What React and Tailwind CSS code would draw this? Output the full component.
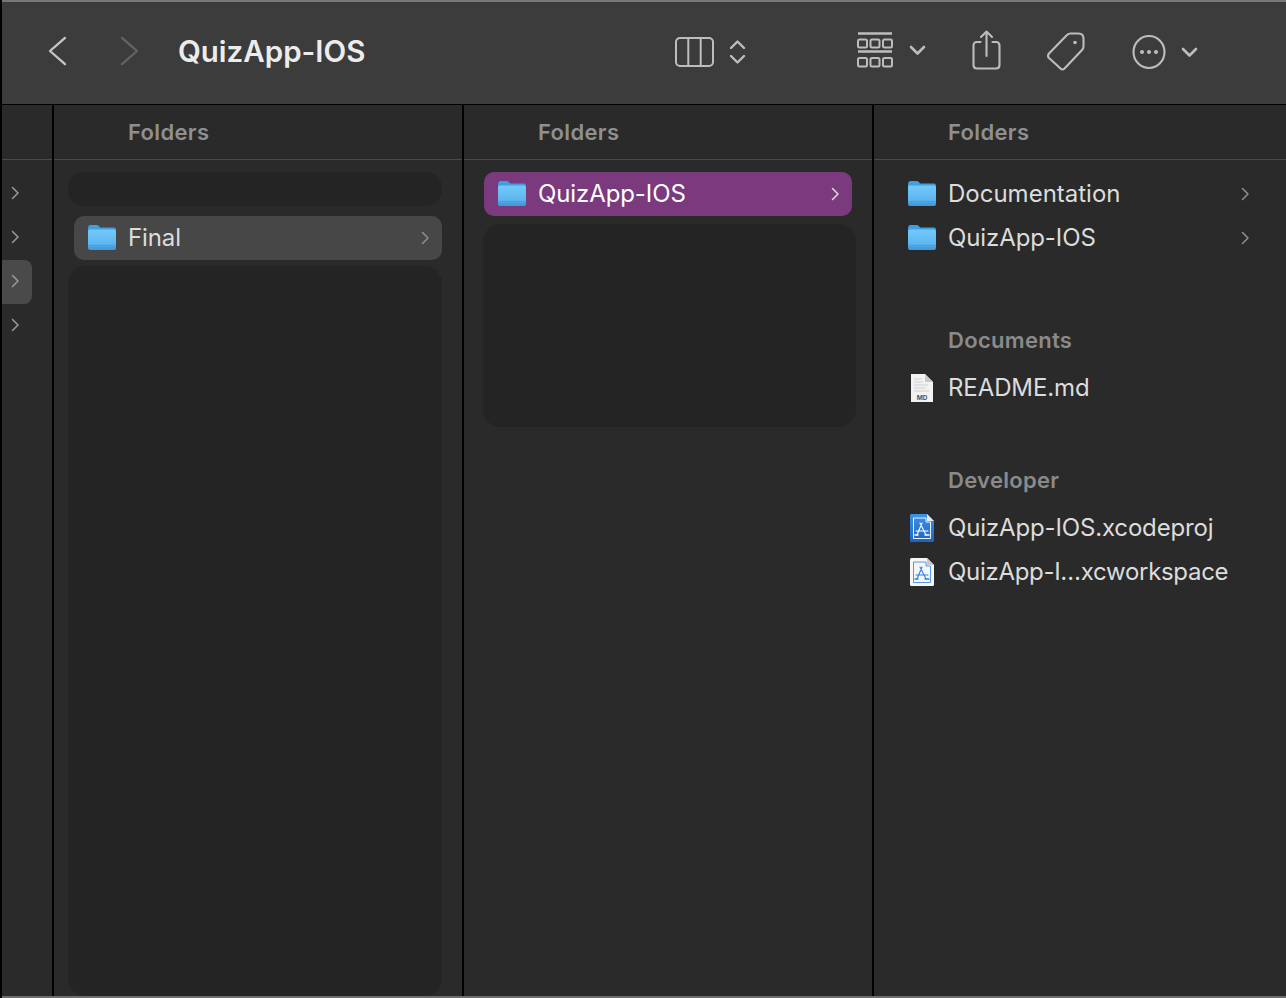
import React from "react";

function Chevron({ className = "" }) {
  return (
    <svg width="9" height="14" viewBox="0 0 9 14" fill="none" className={className}>
      <path d="M1.5 1.5 L7 7 L1.5 12.5" stroke="currentColor" strokeWidth="1.5" strokeLinecap="round" strokeLinejoin="round" />
    </svg>
  );
}

function Folder({ id }) {
  return (
    <svg width="30" height="28" viewBox="0 0 30 28" className="-ml-[1px] mb-[2px] shrink-0">
      <defs>
        <linearGradient id={id} x1="0" y1="0" x2="0" y2="1">
          <stop offset="0" stopColor="#74c9fb" />
          <stop offset="0.7" stopColor="#5cb6f0" />
          <stop offset="1" stopColor="#3d95d8" />
        </linearGradient>
      </defs>
      <path d="M1 6 Q1 2 3.5 2 H9.5 Q11 2 12 3.2 L13.2 4.6 H27 Q29 4.6 29 7 V12 H1 Z" fill="#3f9fe0" />
      <path d="M1 8.5 Q1 6.6 3 6.6 H27 Q29 6.6 29 8.5 V25 Q29 27 27 27 H3 Q1 27 1 25 Z" fill={`url(#${id})`} />
      <path d="M1 22.5 H29 M1 24.5 H29" stroke="#3f96d6" strokeWidth="0.7" opacity="0.8" />
    </svg>
  );
}

function MdFile() {
  return (
    <svg width="30" height="30" viewBox="0 0 30 30" className="-ml-[2px] mb-[1px] shrink-0">
      <path d="M5 1 H19 L27 9 V29 H5 Z" fill="#f2f2f2" />
      <path d="M19 1 L27 9 H19 Z" fill="#c9c9c9" />
      <path d="M8 6 H16 M8 9 H17 M8 12 H22 M8 15 H20 M8 18 H23" stroke="#cfcfcf" strokeWidth="1" />
      <text x="16" y="27" textAnchor="middle" fontSize="6.5" fontWeight="700" fill="#555" fontFamily="Inter, sans-serif">MD</text>
    </svg>
  );
}

function XcodeGlyph({ color }) {
  return (
    <g stroke={color} strokeWidth="1.1" fill="none" strokeLinecap="round">
      <path d="M16 10 L11 22 M14 10 L20 22 M10 18 H22" />
      <path d="M9 22 H12 M19 22 H23" strokeWidth="1.4" />
    </g>
  );
}

function XcodeProj() {
  return (
    <svg width="30" height="30" viewBox="0 0 30 30" className="-ml-[2px] shrink-0">
      <defs>
        <linearGradient id="xp" x1="0" y1="0" x2="0" y2="1">
          <stop offset="0" stopColor="#3f93ea" />
          <stop offset="1" stopColor="#1a63c9" />
        </linearGradient>
      </defs>
      <path d="M5.5 1 Q4 1 4 2.5 V27.5 Q4 29 5.5 29 H26.5 Q28 29 28 27.5 V8 L21 1 Z" fill="url(#xp)" />
      <path d="M21 1 L28 8 H21 Z" fill="#dfeafa" />
      <path d="M7.5 5 H20 V9 H24.5 V25.5 H7.5 Z" fill="none" stroke="#fff" strokeWidth="0.9" />
      <XcodeGlyph color="#fff" />
    </svg>
  );
}

function XcWorkspace() {
  return (
    <svg width="30" height="30" viewBox="0 0 30 30" className="-ml-[2px] shrink-0">
      <path d="M5.5 1 Q4 1 4 2.5 V27.5 Q4 29 5.5 29 H26.5 Q28 29 28 27.5 V8 L21 1 Z" fill="#f6f6f6" />
      <path d="M21 1 L28 8 H21 Z" fill="#c9c9c9" />
      <path d="M7.5 5 H20 V9 H24.5 V25.5 H7.5 Z" fill="none" stroke="#3f8ff0" strokeWidth="0.9" />
      <XcodeGlyph color="#2f7fe6" />
    </svg>
  );
}

function Row({ icon, label, chevron = true, className = "", text = "text-[#dcdcdc]", chev = "text-[#8f8f8f]", track = "" }) {
  return (
    <div className={`flex h-[44px] items-center rounded-[10px] pl-[14px] pr-[12px] ${className}`}>
      <div className="flex w-[40px] shrink-0 items-center">{icon}</div>
      <span className={`flex-1 whitespace-nowrap pb-[1px] text-[24px] ${track} ${text}`}>{label}</span>
      {chevron && <Chevron className={`mb-[1px] ${chev}`} />}
    </div>
  );
}

function ColHeader() {
  return (
    <div className="flex h-[55px] shrink-0 items-center border-b border-[#4a4a4a] pl-[74px]">
      <span className="text-[22px] font-semibold tracking-[0.35px] text-[#8f8f8f]">Folders</span>
    </div>
  );
}

function Section({ title }) {
  return <div className="flex h-[44px] items-center pl-[74px] text-[22px] font-semibold tracking-[0.3px] text-[#8a8a8a]">{title}</div>;
}

export default function App() {
  return (
    <div
      className="flex h-[998px] w-[1286px] flex-col overflow-hidden border-l-2 border-l-black bg-[#2a2a2a]"
      style={{ fontFamily: "Inter, 'Liberation Sans', sans-serif" }}
    >
      {/* Toolbar */}
      <div className="flex h-[105px] shrink-0 items-center border-t-2 border-t-[#777777] border-b border-b-black bg-[#3c3c3c] pb-[3px] pl-[45px] text-[#bdbdbd]">
        <svg width="24" height="32" viewBox="0 0 24 32" fill="none" className="text-[#c4c4c4]">
          <path d="M18 3 L3 16.5 L18 30" transform="translate(0,-1) scale(1 .97)" stroke="currentColor" strokeWidth="2.4" strokeLinecap="round" strokeLinejoin="round" />
        </svg>
        <svg width="24" height="32" viewBox="0 0 24 32" fill="none" className="ml-[47px] text-[#636363]">
          <path d="M4 3 L19 16.5 L4 30" transform="translate(0,-1) scale(1 .97)" stroke="currentColor" strokeWidth="2.4" strokeLinecap="round" strokeLinejoin="round" />
        </svg>
        <span className="ml-[36px] whitespace-nowrap text-[29.5px] font-semibold text-[#ececec]">QuizApp-IOS</span>

        <svg width="76" height="36" viewBox="0 0 76 36" fill="none" stroke="currentColor" strokeWidth="2" className="ml-[309px]" strokeLinecap="round" strokeLinejoin="round">
          <rect x="2" y="4" width="37" height="28" rx="4" />
          <path d="M14.3 4 V32 M26.7 4 V32" />
          <path d="M57 14 L63.5 7.5 L70 14" strokeWidth="2.4" />
          <path d="M57 22 L63.5 28.5 L70 22" strokeWidth="2.4" />
        </svg>

        <svg width="74" height="42" viewBox="0 0 74 42" fill="none" stroke="currentColor" className="ml-[106px]" strokeLinecap="round" strokeLinejoin="round">
          <path d="M2 2.5 H36 M2 20.5 H36" strokeWidth="2.4" strokeLinecap="butt" />
          <rect x="2" y="8.5" width="9" height="8" rx="1.5" strokeWidth="2" />
          <rect x="14.5" y="8.5" width="9" height="8" rx="1.5" strokeWidth="2" />
          <rect x="27" y="8.5" width="9" height="8" rx="1.5" strokeWidth="2" />
          <rect x="2" y="27" width="9" height="8.5" rx="1.5" strokeWidth="2" />
          <rect x="14.5" y="27" width="9" height="8.5" rx="1.5" strokeWidth="2" />
          <rect x="27" y="27" width="9" height="8.5" rx="1.5" strokeWidth="2" />
          <path d="M55 16 L61.5 22.5 L68 16" strokeWidth="2.6" />
        </svg>

        <svg width="34" height="42" viewBox="0 0 34 42" fill="none" stroke="currentColor" strokeWidth="2.1" className="ml-[41px] -mt-[3px]" strokeLinecap="round" strokeLinejoin="round">
          <path d="M9.5 13 H6 Q2.5 13 2.5 16.5 V36 Q2.5 39.5 6 39.5 H25 Q28.5 39.5 28.5 36 V16.5 Q28.5 13 25 13 H21.5" />
          <path d="M15.5 27 V2.5 M10 8 L15.5 2.5 L21 8" />
        </svg>

        <svg width="44" height="44" viewBox="0 0 44 44" fill="none" stroke="currentColor" strokeWidth="2.1" className="ml-[41px]" strokeLinecap="round" strokeLinejoin="round">
          <path d="M24.5 3.5 H32.5 Q37.5 3.5 37.5 8.5 V16.5 Q37.5 18.5 36 20 L18.5 38.5 Q16.5 40.5 14.5 38.5 L3 28 Q1 26 3 23.5 L21 5 Q22.5 3.5 24.5 3.5 Z" />
          <circle cx="29" cy="12.5" r="1.8" fill="currentColor" stroke="none" />
        </svg>

        <svg width="70" height="36" viewBox="0 0 70 36" fill="none" stroke="currentColor" className="ml-[42px]" strokeLinecap="round" strokeLinejoin="round">
          <ellipse cx="17" cy="18" rx="15.5" ry="16" strokeWidth="2.1" />
          <circle cx="10" cy="18" r="2" fill="currentColor" stroke="none" />
          <circle cx="17" cy="18" r="2" fill="currentColor" stroke="none" />
          <circle cx="24" cy="18" r="2" fill="currentColor" stroke="none" />
          <path d="M51 15 L57.5 21.5 L64 15" strokeWidth="2.6" />
        </svg>
      </div>

      {/* Columns */}
      <div className="flex min-h-0 flex-1 border-b-2 border-b-[#6e6e6e]">
        {/* Column 0 */}
        <div className="flex w-[52px] shrink-0 flex-col border-r-2 border-r-black">
          <div className="h-[55px] shrink-0 border-b border-[#4a4a4a]" />
          <div className="flex flex-col pt-[12px] text-[#9a9a9a]">
            <div className="flex h-[44px] items-center pb-[2px] pl-[9px]"><Chevron /></div>
            <div className="flex h-[44px] items-center pb-[2px] pl-[9px]"><Chevron /></div>
            <div className="flex h-[44px] w-[30px] items-center rounded-r-[8px] bg-[#4a4a4a] pb-[2px] pl-[9px]"><Chevron /></div>
            <div className="flex h-[44px] items-center pb-[2px] pl-[9px]"><Chevron /></div>
          </div>
        </div>

        {/* Column 1 */}
        <div className="flex w-[410px] shrink-0 flex-col border-r-2 border-r-black">
          <ColHeader />
          <div className="flex min-h-0 flex-1 flex-col pl-[14px] pr-[20px] pt-[12px]">
            <div className="h-[34px] shrink-0 rounded-[16px] bg-[#242424]" />
            <div className="mt-[10px] shrink-0 pl-[6px]">
              <Row icon={<Folder id="f1" />} label="Final" className="bg-[#474747]" track="tracking-[-0.1px]" />
            </div>
            <div className="mt-[6px] flex-1 rounded-[18px] bg-[#242424]" />
          </div>
        </div>

        {/* Column 2 */}
        <div className="flex w-[410px] shrink-0 flex-col border-r-2 border-r-black">
          <ColHeader />
          <div className="flex flex-col pl-[20px] pr-[16px] pt-[12px]">
            <div className="pr-[4px]">
              <Row icon={<Folder id="f2" />} label="QuizApp-IOS" className="bg-[#7a3a7d]" text="text-white" chev="text-[#e6d6e6]" track="tracking-[-0.1px]" />
            </div>
            <div className="-ml-[1px] mt-[8px] h-[203px] rounded-[18px] bg-[#242424]" />
          </div>
        </div>

        {/* Column 3 */}
        <div className="flex min-w-0 flex-1 flex-col">
          <ColHeader />
          <div className="flex flex-col pl-[20px] pr-[24px] pt-[12px]">
            <Row icon={<Folder id="f3" />} label="Documentation" />
            <Row icon={<Folder id="f4" />} label="QuizApp-IOS" track="tracking-[-0.1px]" />
            <div className="-ml-[20px] mt-[58px]"><Section title="Documents" /></div>
            <div className="mt-[4px]"><Row icon={<MdFile />} label="README.md" chevron={false} track="tracking-[-0.1px]" /></div>
            <div className="-ml-[20px] mt-[48px]"><Section title="Developer" /></div>
            <div className="mt-[4px]"><Row icon={<XcodeProj />} label="QuizApp-IOS.xcodeproj" chevron={false} track="tracking-[-0.15px]" /></div>
            <Row icon={<XcWorkspace />} label="QuizApp-I…xcworkspace" chevron={false} track="tracking-[-0.3px]" />
          </div>
        </div>
      </div>
    </div>
  );
}
